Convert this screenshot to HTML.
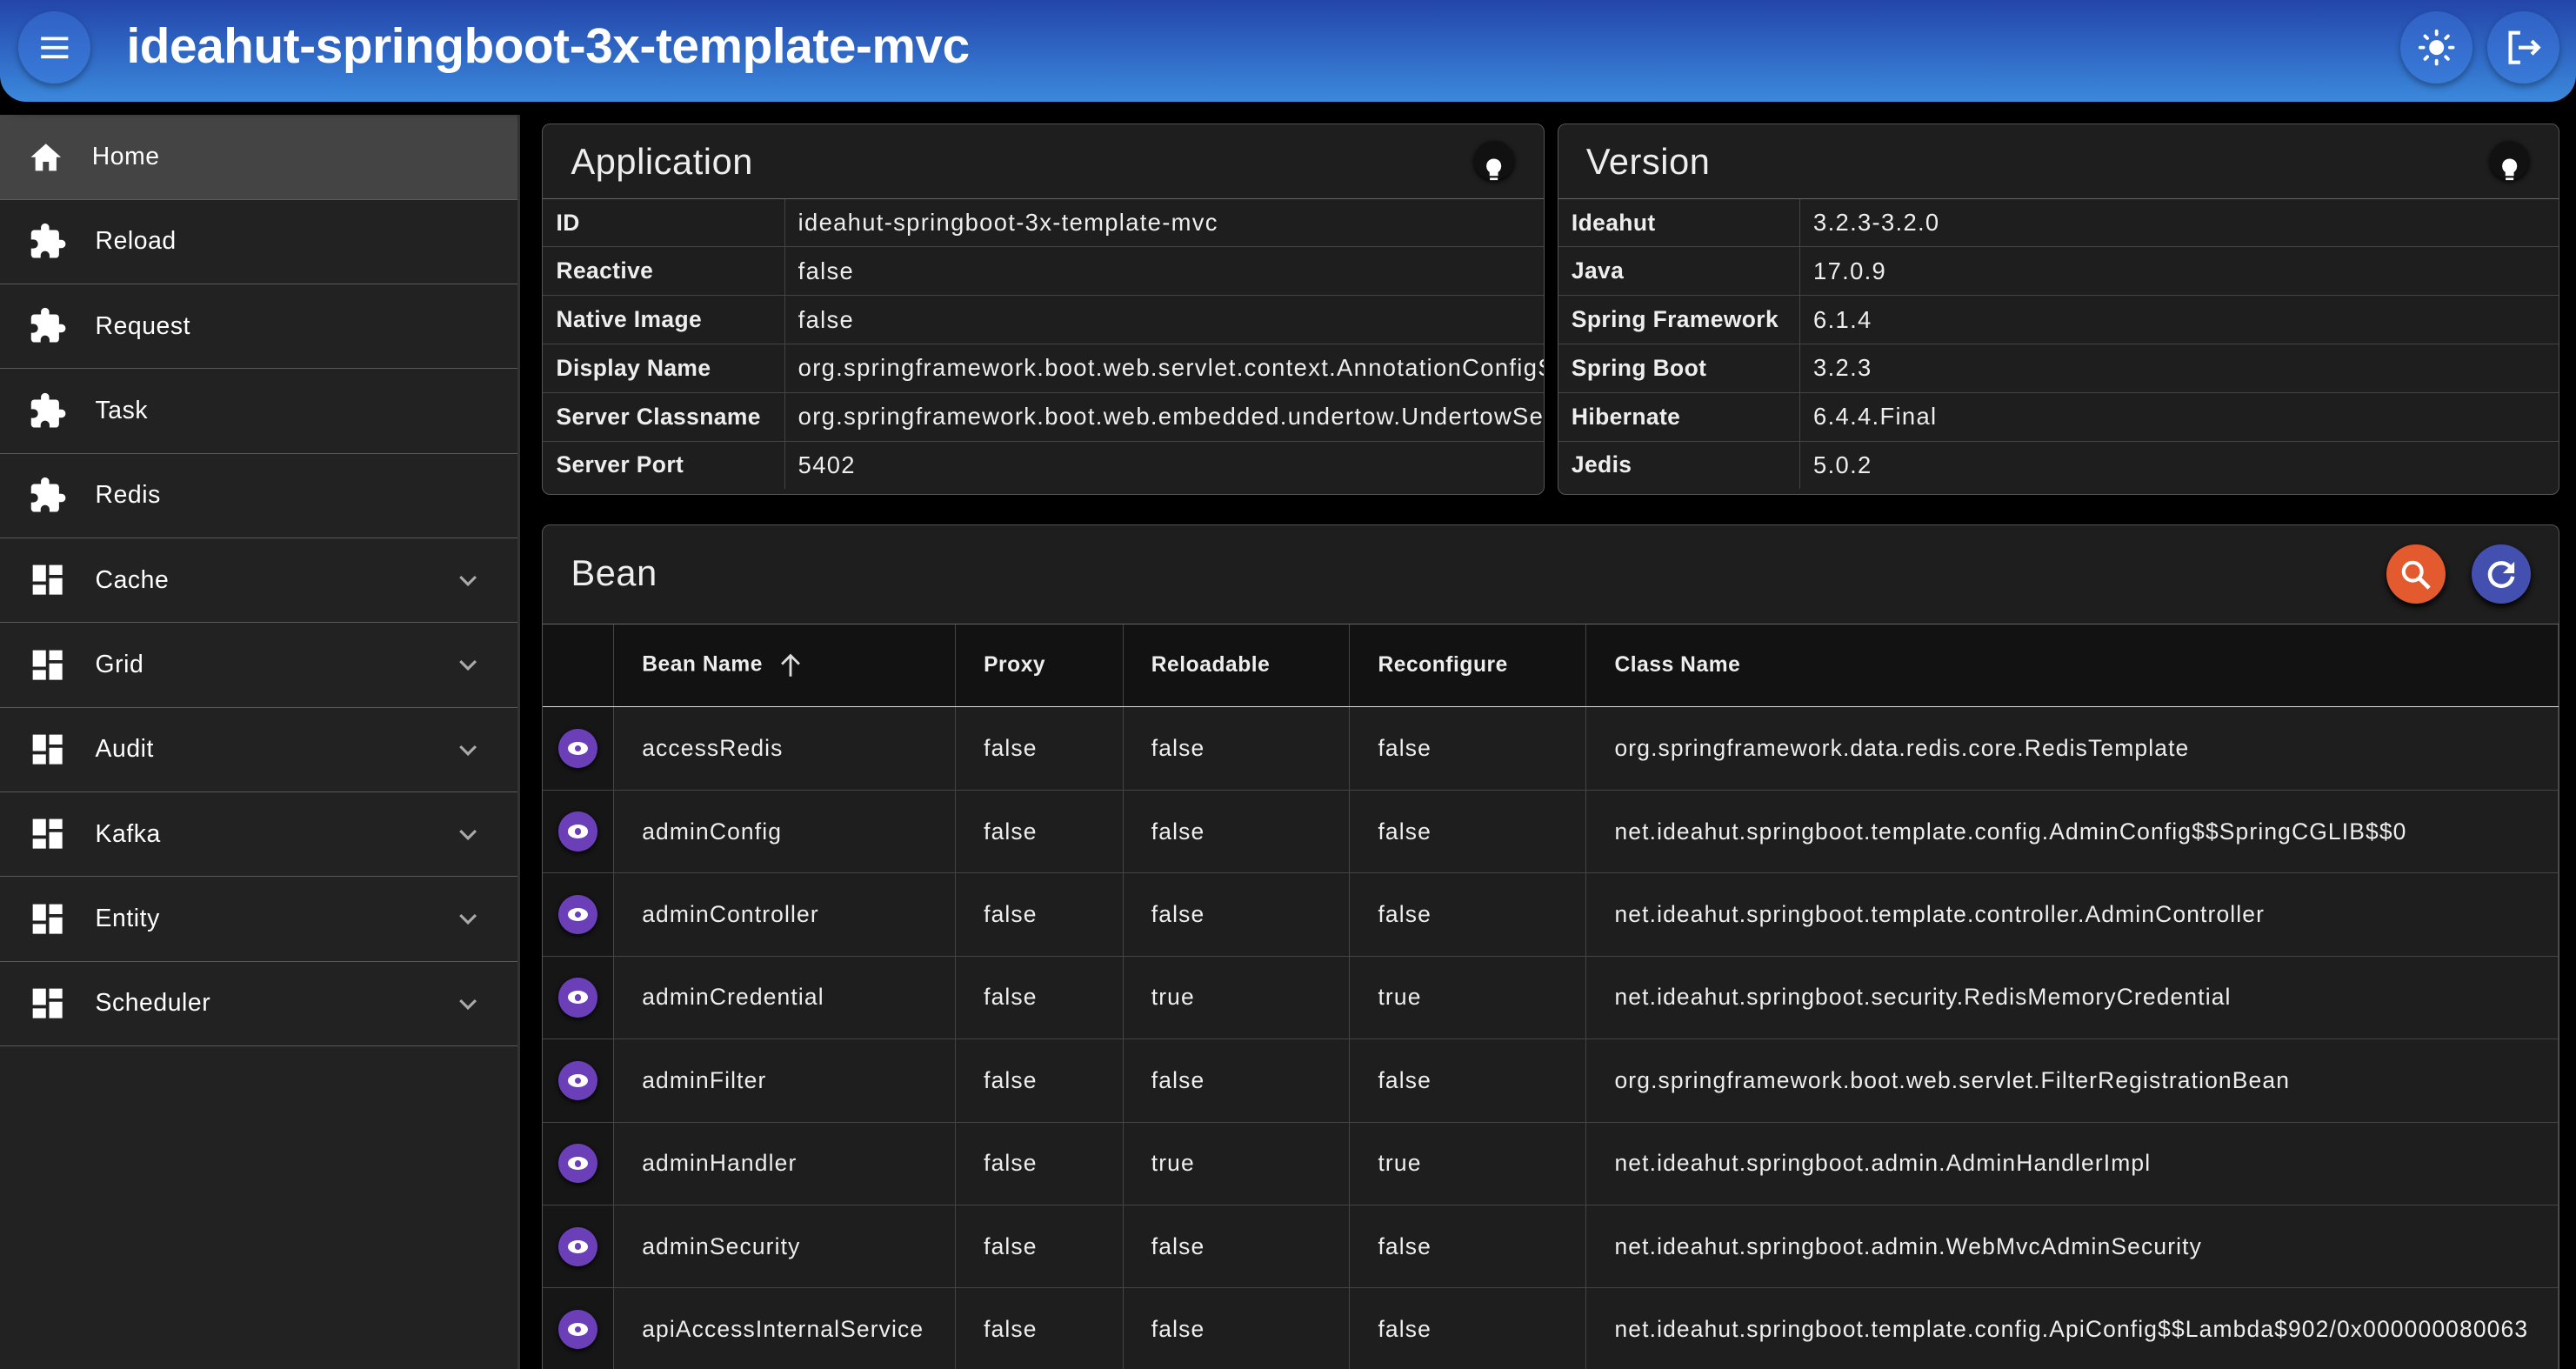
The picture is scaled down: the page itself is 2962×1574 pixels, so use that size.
<!DOCTYPE html>
<html><head><meta charset="utf-8"><style>
html,body{margin:0;padding:0;background:#000;overflow:hidden}
body{width:2962px;height:1574px}
#w{zoom:1.889;width:1568px;height:834px;position:relative;font-family:"Liberation Sans",sans-serif;color:#eee;overflow:hidden;background:#000}
.hdr{position:absolute;left:0;top:0;width:1568px;height:62px;background:linear-gradient(#2345aa,#3b89dd);border-radius:0 0 16px 16px;box-shadow:0 3px 8px #000;z-index:3}
.cb{position:absolute;width:44px;height:44px;border-radius:50%;background:rgba(60,120,220,.5);box-shadow:0 2px 4px rgba(0,0,0,.35);display:flex;align-items:center;justify-content:center}
.title{position:absolute;left:77px;top:11px;font-size:30px;font-weight:bold;color:#fff;letter-spacing:-.2px}
.side{position:absolute;left:0;top:70px;width:315px;height:770px;background:#222;border-right:2px solid #333}
.it{height:51px;border-bottom:1px solid #5a5a5a;display:flex;align-items:center;font-size:15px;color:#fff;position:relative;letter-spacing:.3px}
.it svg.ic{margin-left:17px;margin-right:17px}
.it .ch{position:absolute;right:22px;top:18px}
.card{position:absolute;background:#1e1e1e;border:1px solid #555;border-radius:5px;box-sizing:border-box;overflow:hidden}
.ch2{height:45px;border-bottom:1px solid #666;font-size:22px;padding-left:17px;line-height:45px;position:relative;letter-spacing:.3px}
.bulb{position:absolute;right:18px;top:10px;width:24px;height:24px;border-radius:50%;background:#111;box-shadow:0 1px 3px #000}
table{border-collapse:collapse;font-size:14px;width:100%}
.kv{table-layout:fixed}
.kv td{height:29px;border-bottom:1px solid #444;padding:0 8px;white-space:nowrap;overflow:hidden;font-size:14.5px;letter-spacing:.7px}
.kv td:first-child{font-weight:bold;border-right:1px solid #444;font-size:14px;letter-spacing:.2px}
.kv tr:last-child td{border-bottom:none}
.bt{table-layout:fixed}
.bt th{background:#121212;height:50px;text-align:left;font-size:13px;font-weight:bold;padding:0 0 0 17px;border-right:1px solid #444;border-bottom:1px solid #ddd;letter-spacing:.3px}
.bt td{height:50px;border-bottom:1px solid #444;border-right:1px solid #444;padding:0 0 0 17px;white-space:nowrap;overflow:hidden;font-size:14px;letter-spacing:.6px}
.bt td:first-child{padding:0;text-align:center;background:#161616}
.eye{display:inline-block;width:24px;height:24px;border-radius:50%;background:#6a3fb8;vertical-align:middle;position:relative;box-shadow:0 1px 3px #000}
.eye:after{content:"";position:absolute;left:6px;top:8px;width:12px;height:8px;border-radius:50%;background:#fff}
.eye:before{content:"";position:absolute;left:10px;top:10px;width:4px;height:4px;border-radius:50%;background:#6a3fb8;z-index:1}
</style></head><body><div id="w">
<div class="hdr">
 <div class="cb" style="left:11px;top:7px"><svg width="22" height="22" viewBox="0 0 24 24"><path d="M3 6h18M3 12h18M3 18h18" stroke="#fff" stroke-width="2.2"/></svg></div>
 <div class="title">ideahut-springboot-3x-template-mvc</div>
 <div class="cb" style="left:1461px;top:7px"><svg width="24" height="24" viewBox="0 0 24 24" fill="#fff" stroke="#fff" stroke-width="2" stroke-linecap="round"><circle cx="12" cy="12" r="4.5" stroke="none"/><path d="M12 2v2M12 20v2M2 12h2M20 12h2M5 5l1.4 1.4M17.6 17.6L19 19M5 19l1.4-1.4M17.6 6.4L19 5"/></svg></div>
 <div class="cb" style="left:1514px;top:7px"><svg width="24" height="24" viewBox="0 0 24 24" fill="none" stroke="#fff" stroke-width="2.2"><path d="M10 3H4v18h6M9 12h12M17 8l4 4-4 4"/></svg></div>
</div>
<div class="side">
 <div class="it" style="background:#444"><svg class="ic" width="22" height="22" viewBox="0 0 24 24" fill="#fff"><path d="M12 3L2 12h3v9h5v-6h4v6h5v-9h3z"/></svg>Home</div>
 <div class="it"><svg class="ic" width="24" height="24" viewBox="0 0 24 24" fill="#fff"><path d="M20.5 11H19V7a2 2 0 0 0-2-2h-4V3.5a2.5 2.5 0 0 0-5 0V5H4a2 2 0 0 0-2 2v3.8h1.5a2.7 2.7 0 0 1 0 5.4H2V20a2 2 0 0 0 2 2h3.8v-1.5a2.7 2.7 0 0 1 5.4 0V22H17a2 2 0 0 0 2-2v-4h1.5a2.5 2.5 0 0 0 0-5z"/></svg>Reload</div>
 <div class="it"><svg class="ic" width="24" height="24" viewBox="0 0 24 24" fill="#fff"><path d="M20.5 11H19V7a2 2 0 0 0-2-2h-4V3.5a2.5 2.5 0 0 0-5 0V5H4a2 2 0 0 0-2 2v3.8h1.5a2.7 2.7 0 0 1 0 5.4H2V20a2 2 0 0 0 2 2h3.8v-1.5a2.7 2.7 0 0 1 5.4 0V22H17a2 2 0 0 0 2-2v-4h1.5a2.5 2.5 0 0 0 0-5z"/></svg>Request</div>
 <div class="it"><svg class="ic" width="24" height="24" viewBox="0 0 24 24" fill="#fff"><path d="M20.5 11H19V7a2 2 0 0 0-2-2h-4V3.5a2.5 2.5 0 0 0-5 0V5H4a2 2 0 0 0-2 2v3.8h1.5a2.7 2.7 0 0 1 0 5.4H2V20a2 2 0 0 0 2 2h3.8v-1.5a2.7 2.7 0 0 1 5.4 0V22H17a2 2 0 0 0 2-2v-4h1.5a2.5 2.5 0 0 0 0-5z"/></svg>Task</div>
 <div class="it"><svg class="ic" width="24" height="24" viewBox="0 0 24 24" fill="#fff"><path d="M20.5 11H19V7a2 2 0 0 0-2-2h-4V3.5a2.5 2.5 0 0 0-5 0V5H4a2 2 0 0 0-2 2v3.8h1.5a2.7 2.7 0 0 1 0 5.4H2V20a2 2 0 0 0 2 2h3.8v-1.5a2.7 2.7 0 0 1 5.4 0V22H17a2 2 0 0 0 2-2v-4h1.5a2.5 2.5 0 0 0 0-5z"/></svg>Redis</div>
 <div class="it"><svg class="ic" width="24" height="24" viewBox="0 0 24 24" fill="#fff"><path d="M3 3h8v10H3zM13 3h8v6h-8zM3 15h8v6H3zM13 11h8v10h-8z"/></svg>Cache<svg class="ch" width="16" height="16" viewBox="0 0 24 24"><path d="M5 8l7 7 7-7" stroke="#aaa" stroke-width="2.5" fill="none"/></svg></div>
 <div class="it"><svg class="ic" width="24" height="24" viewBox="0 0 24 24" fill="#fff"><path d="M3 3h8v10H3zM13 3h8v6h-8zM3 15h8v6H3zM13 11h8v10h-8z"/></svg>Grid<svg class="ch" width="16" height="16" viewBox="0 0 24 24"><path d="M5 8l7 7 7-7" stroke="#aaa" stroke-width="2.5" fill="none"/></svg></div>
 <div class="it"><svg class="ic" width="24" height="24" viewBox="0 0 24 24" fill="#fff"><path d="M3 3h8v10H3zM13 3h8v6h-8zM3 15h8v6H3zM13 11h8v10h-8z"/></svg>Audit<svg class="ch" width="16" height="16" viewBox="0 0 24 24"><path d="M5 8l7 7 7-7" stroke="#aaa" stroke-width="2.5" fill="none"/></svg></div>
 <div class="it"><svg class="ic" width="24" height="24" viewBox="0 0 24 24" fill="#fff"><path d="M3 3h8v10H3zM13 3h8v6h-8zM3 15h8v6H3zM13 11h8v10h-8z"/></svg>Kafka<svg class="ch" width="16" height="16" viewBox="0 0 24 24"><path d="M5 8l7 7 7-7" stroke="#aaa" stroke-width="2.5" fill="none"/></svg></div>
 <div class="it"><svg class="ic" width="24" height="24" viewBox="0 0 24 24" fill="#fff"><path d="M3 3h8v10H3zM13 3h8v6h-8zM3 15h8v6H3zM13 11h8v10h-8z"/></svg>Entity<svg class="ch" width="16" height="16" viewBox="0 0 24 24"><path d="M5 8l7 7 7-7" stroke="#aaa" stroke-width="2.5" fill="none"/></svg></div>
 <div class="it"><svg class="ic" width="24" height="24" viewBox="0 0 24 24" fill="#fff"><path d="M3 3h8v10H3zM13 3h8v6h-8zM3 15h8v6H3zM13 11h8v10h-8z"/></svg>Scheduler<svg class="ch" width="16" height="16" viewBox="0 0 24 24"><path d="M5 8l7 7 7-7" stroke="#aaa" stroke-width="2.5" fill="none"/></svg></div>
</div>

<div class="card" style="left:330px;top:75px;width:610px;height:226px">
 <div class="ch2">Application<div class="bulb"><svg width="24" height="24" viewBox="0 0 24 24"><path d="M12 5a4.5 4.5 0 0 0-2.6 8.2V15.5h5.2v-2.3A4.5 4.5 0 0 0 12 5zM9.6 16.6h4.8v1.5H9.6z" fill="#fff"/></svg></div></div>
 <table class="kv"><colgroup><col style="width:147px"><col></colgroup>
 <tr><td>ID</td><td>ideahut-springboot-3x-template-mvc</td></tr>
 <tr><td>Reactive</td><td>false</td></tr>
 <tr><td>Native Image</td><td>false</td></tr>
 <tr><td>Display Name</td><td>org.springframework.boot.web.servlet.context.AnnotationConfigSe</td></tr>
 <tr><td>Server Classname</td><td>org.springframework.boot.web.embedded.undertow.UndertowServ</td></tr>
 <tr><td>Server Port</td><td>5402</td></tr>
 </table>
</div>
<div class="card" style="left:948px;top:75px;width:610px;height:226px">
 <div class="ch2">Version<div class="bulb"><svg width="24" height="24" viewBox="0 0 24 24"><path d="M12 5a4.5 4.5 0 0 0-2.6 8.2V15.5h5.2v-2.3A4.5 4.5 0 0 0 12 5zM9.6 16.6h4.8v1.5H9.6z" fill="#fff"/></svg></div></div>
 <table class="kv"><colgroup><col style="width:147px"><col></colgroup>
 <tr><td>Ideahut</td><td>3.2.3-3.2.0</td></tr>
 <tr><td>Java</td><td>17.0.9</td></tr>
 <tr><td>Spring Framework</td><td>6.1.4</td></tr>
 <tr><td>Spring Boot</td><td>3.2.3</td></tr>
 <tr><td>Hibernate</td><td>6.4.4.Final</td></tr>
 <tr><td>Jedis</td><td>5.0.2</td></tr>
 </table>
</div>

<div class="card" style="left:330px;top:319px;width:1228px;height:530px">
 <div class="ch2" style="height:60px;line-height:58px">Bean
  <div style="position:absolute;left:1122px;top:12px;width:36px;height:36px;border-radius:50%;background:#e25a2e;box-shadow:0 2px 4px #000"><svg width="36" height="36" viewBox="0 0 36 36"><circle cx="16" cy="16" r="5.5" stroke="#fff" stroke-width="2.2" fill="none"/><path d="M20 20l6 6" stroke="#fff" stroke-width="2.5"/></svg></div>
  <div style="position:absolute;left:1174px;top:12px;width:36px;height:36px;border-radius:50%;background:#4350b0;box-shadow:0 2px 4px #000"><svg width="36" height="36" viewBox="0 0 36 36"><path d="M24 14a7 7 0 1 0 1 5" stroke="#fff" stroke-width="2.4" fill="none"/><path d="M26 10v7h-7z" fill="#fff"/></svg></div>
 </div>
 <table class="bt">
 <colgroup><col style="width:43px"><col style="width:208px"><col style="width:102px"><col style="width:138px"><col style="width:144px"><col></colgroup>
 <tr><th style="padding:0"></th><th>Bean Name <svg width="18" height="18" viewBox="0 0 24 24" style="vertical-align:middle;margin-left:4px"><path d="M12 21V4M5 11l7-7 7 7" stroke="#ddd" stroke-width="2" fill="none"/></svg></th><th>Proxy</th><th>Reloadable</th><th>Reconfigure</th><th>Class Name</th></tr>
 <tr><td><span class="eye"></span></td><td>accessRedis</td><td>false</td><td>false</td><td>false</td><td>org.springframework.data.redis.core.RedisTemplate</td></tr>
 <tr><td><span class="eye"></span></td><td>adminConfig</td><td>false</td><td>false</td><td>false</td><td>net.ideahut.springboot.template.config.AdminConfig$$SpringCGLIB$$0</td></tr>
 <tr><td><span class="eye"></span></td><td>adminController</td><td>false</td><td>false</td><td>false</td><td>net.ideahut.springboot.template.controller.AdminController</td></tr>
 <tr><td><span class="eye"></span></td><td>adminCredential</td><td>false</td><td>true</td><td>true</td><td>net.ideahut.springboot.security.RedisMemoryCredential</td></tr>
 <tr><td><span class="eye"></span></td><td>adminFilter</td><td>false</td><td>false</td><td>false</td><td>org.springframework.boot.web.servlet.FilterRegistrationBean</td></tr>
 <tr><td><span class="eye"></span></td><td>adminHandler</td><td>false</td><td>true</td><td>true</td><td>net.ideahut.springboot.admin.AdminHandlerImpl</td></tr>
 <tr><td><span class="eye"></span></td><td>adminSecurity</td><td>false</td><td>false</td><td>false</td><td>net.ideahut.springboot.admin.WebMvcAdminSecurity</td></tr>
 <tr><td><span class="eye"></span></td><td>apiAccessInternalService</td><td>false</td><td>false</td><td>false</td><td>net.ideahut.springboot.template.config.ApiConfig$$Lambda$902/0x000000080063</td></tr>
 </table>
</div>
</div></body></html>
